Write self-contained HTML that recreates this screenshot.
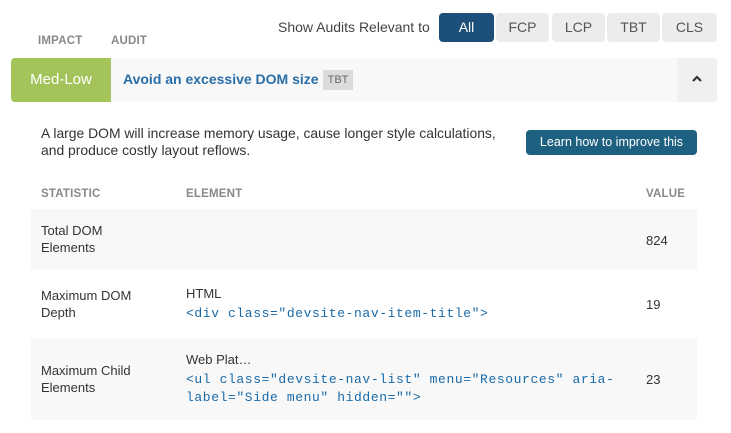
<!DOCTYPE html>
<html><head><meta charset="utf-8"><style>
*{margin:0;padding:0;box-sizing:border-box}
body{width:731px;height:433px;background:#fff;font-family:"Liberation Sans",sans-serif;color:#333;position:relative;overflow:hidden}
.a{position:absolute}
.btn{position:absolute;top:13px;height:29px;border-radius:4px;background:#ececec;color:#555;font-size:14px;line-height:29px;text-align:center}
.hd{font-size:11.5px;font-weight:bold;color:#888;letter-spacing:.2px}
.t{font-size:13px;color:#333;line-height:17px}
.m{font-family:"Liberation Mono",monospace;font-size:13px;letter-spacing:.6px;color:#1a6aa8;line-height:18px}
</style></head><body>
<div class="a" style="left:278px;top:19px;font-size:14px;color:#444">Show Audits Relevant to</div>
<div class="btn" style="left:439px;width:55px;background:#1c4f79;color:#fff">All</div>
<div class="btn" style="left:496px;width:53px">FCP</div>
<div class="btn" style="left:552px;width:53px">LCP</div>
<div class="btn" style="left:607px;width:53px">TBT</div>
<div class="btn" style="left:662px;width:55px">CLS</div>
<div class="a hd" style="left:38px;top:35px">IMPACT</div>
<div class="a hd" style="left:111px;top:35px">AUDIT</div>
<div class="a" style="left:11px;top:58px;width:706px;height:44px;background:#f8f8f8;border-radius:4px"></div>
<div class="a" style="left:11px;top:58px;width:100px;height:44px;background:#a2c45a;border-radius:4px 0 0 4px;color:#fff;font-size:15px;line-height:44px;text-align:center">Med-Low</div>
<div class="a" style="left:123px;top:71px;font-size:14px;font-weight:bold;color:#2a6ea8">Avoid an excessive DOM size</div>
<div class="a" style="left:323px;top:70px;width:30px;height:20px;background:#dcdcdc;color:#666;font-size:11px;line-height:20px;text-align:center">TBT</div>
<div class="a" style="left:677px;top:58px;width:40px;height:44px;background:#f0f0f0;border-radius:0 4px 4px 0"></div>
<svg class="a" style="left:691px;top:74px" width="12" height="10"><path d="M2 7 L6 3 L10 7" stroke="#333" stroke-width="2.2" fill="none"/></svg>
<div class="a t" style="left:41px;top:125px;font-size:13.9px">A large DOM will increase memory usage, cause longer style calculations,<br>and produce costly layout reflows.</div>
<div class="a" style="left:526px;top:130px;width:171px;height:25px;background:#1e6080;border-radius:4px;color:#fff;font-size:12.5px;line-height:25px;text-align:center">Learn how to improve this</div>
<div class="a hd" style="left:41px;top:188px">STATISTIC</div>
<div class="a hd" style="left:186px;top:188px">ELEMENT</div>
<div class="a hd" style="left:646px;top:188px">VALUE</div>
<div class="a" style="left:31px;top:209px;width:666px;height:61px;background:#f8f8f8"></div>
<div class="a t" style="left:41px;top:222px">Total DOM<br>Elements</div>
<div class="a t" style="left:646px;top:232px">824</div>
<div class="a t" style="left:41px;top:287px">Maximum DOM<br>Depth</div>
<div class="a t" style="left:186px;top:285px">HTML</div>
<div class="a m" style="left:186px;top:305px">&lt;div class="devsite-nav-item-title"&gt;</div>
<div class="a t" style="left:646px;top:296px">19</div>
<div class="a" style="left:31px;top:338px;width:666px;height:82px;background:#f8f8f8"></div>
<div class="a t" style="left:41px;top:362px">Maximum Child<br>Elements</div>
<div class="a t" style="left:186px;top:351px">Web Plat…</div>
<div class="a m" style="left:186px;top:371px">&lt;ul class="devsite-nav-list" menu="Resources" aria-<br>label="Side menu" hidden=""&gt;</div>
<div class="a t" style="left:646px;top:371px">23</div>
</body></html>
